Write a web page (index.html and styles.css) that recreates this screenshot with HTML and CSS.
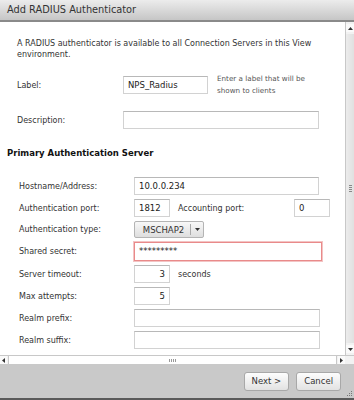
FILE: index.html
```html
<!DOCTYPE html>
<html lang="en">
<head>
  <meta charset="UTF-8">
  <title>Add RADIUS Authenticator</title>
  <link rel="stylesheet" href="styles.css">
</head>
<body>
  <div class="dialog">
    <header class="titlebar">Add RADIUS Authenticator</header>

    <div class="viewport">
      <main class="content">
        <p class="intro">A RADIUS authenticator is available to all Connection Servers in this View environment.</p>

        <div class="form general">
          <label>Label:</label>
          <div class="field">
            <div class="input w-label">NPS_Radius</div>
            <span class="help">Enter a label that will be<br>shown to clients</span>
          </div>

          <label>Description:</label>
          <div class="field">
            <div class="input w-desc"></div>
          </div>
        </div>

        <h2>Primary Authentication Server</h2>

        <div class="form server">
          <label>Hostname/Address:</label>
          <div class="field"><div class="input w-host">10.0.0.234</div></div>

          <label>Authentication port:</label>
          <div class="field">
            <div class="input w-port">1812</div>
            <span class="inline-label acct">Accounting port:</span>
            <div class="input w-port">0</div>
          </div>

          <label>Authentication type:</label>
          <div class="field">
            <div class="select">
              <span class="select-text">MSCHAP2</span>
              <span class="select-arrow">
                <svg width="5" height="3" viewBox="0 0 5 3"><path d="M0 0h5L2.5 3z" fill="#333"/></svg>
              </span>
            </div>
          </div>

          <label>Shared secret:</label>
          <div class="field"><div class="input w-secret invalid">*********</div></div>

          <label>Server timeout:</label>
          <div class="field">
            <div class="input w-port num">3</div>
            <span class="inline-label">seconds</span>
          </div>

          <label>Max attempts:</label>
          <div class="field"><div class="input w-port num">5</div></div>

          <label>Realm prefix:</label>
          <div class="field"><div class="input w-realm"></div></div>

          <label>Realm suffix:</label>
          <div class="field"><div class="input w-realm"></div></div>
        </div>
      </main>

      <div class="vscroll">
        <div class="arrow-btn up">
          <svg width="5" height="3" viewBox="0 0 5 3"><path d="M0 3h5L2.5 0z" fill="#333"/></svg>
        </div>
        <div class="vthumb"><span class="grip-v"></span></div>
        <div class="arrow-btn down">
          <svg width="5" height="3" viewBox="0 0 5 3"><path d="M0 0h5L2.5 3z" fill="#333"/></svg>
        </div>
      </div>
    </div>

    <div class="hscroll">
      <div class="arrow-btn left">
        <svg width="3" height="5" viewBox="0 0 3 5"><path d="M3 0v5L0 2.5z" fill="#333"/></svg>
      </div>
      <div class="hthumb"><span class="grip-h"></span></div>
      <div class="arrow-btn right">
        <svg width="3" height="5" viewBox="0 0 3 5"><path d="M0 0v5L3 2.5z" fill="#333"/></svg>
      </div>
      <div class="corner"></div>
    </div>

    <footer class="footer">
      <button>Next &gt;</button>
      <button>Cancel</button>
      <svg class="resize" width="6" height="6" viewBox="0 0 6 6">
        <rect x="4" y="0" width="1" height="1" fill="#777"/>
        <rect x="2" y="2" width="1" height="1" fill="#777"/>
        <rect x="4" y="2" width="1" height="1" fill="#777"/>
        <rect x="0" y="4" width="1" height="1" fill="#777"/>
        <rect x="2" y="4" width="1" height="1" fill="#777"/>
        <rect x="4" y="4" width="1" height="1" fill="#777"/>
      </svg>
    </footer>
  </div>
</body>
</html>
```

FILE: styles.css
```css
body {
  margin: 0;
  font-family: "DejaVu Sans", Verdana, sans-serif;
  font-size: 8px;
  color: #333;
  background: #fff;
}
.dialog {
  width: 354px;
  height: 400px;
  display: flex;
  flex-direction: column;
  overflow: hidden;
}
.titlebar {
  height: 20px;
  line-height: 20px;
  padding-left: 7px;
  font-size: 9.8px;
  color: #333;
  background: linear-gradient(#ececec, #c6c6c6);
  border-bottom: 2px solid #8a8a8a;
  flex: none;
}
.viewport {
  height: 333px;
  display: flex;
  flex: none;
}
.content {
  flex: 1;
  overflow: hidden;
}
.intro {
  margin: 16px 20px 0 17px;
  line-height: 11px;
}
.form {
  display: grid;
  align-items: center;
}
.general {
  grid-template-columns: 106px 1fr;
  row-gap: 14px;
  margin: 13px 0 0 17px;
}
.server {
  grid-template-columns: 115px 1fr;
  row-gap: 4px;
  margin: 18px 0 0 19px;
}
.field {
  display: flex;
  align-items: center;
}
.input {
  box-sizing: border-box;
  height: 18px;
  line-height: 16px;
  padding: 0 4px;
  border: 1px solid #d2d2d2;
  border-top-color: #b8b8b8;
  background: #fff;
  font-size: 8.5px;
  color: #222;
  white-space: nowrap;
}
.input.num {
  text-align: right;
}
.input.invalid {
  border: 1px solid #e98a8a;
  box-shadow: 0 0 0 1px #f3c4c4;
  height: 19px;
}
.w-label { width: 85px; }
.w-desc { width: 196px; }
.w-host { width: 185px; }
.w-port { width: 36px; }
.w-secret { width: 188px; }
.w-realm { width: 186px; }
.help {
  margin-left: 9px;
  font-size: 7.2px;
  line-height: 12px;
  color: #555;
}
.inline-label {
  margin-left: 8px;
}
.acct {
  width: 116px;
}
h2 {
  margin: 18px 0 0 7px;
  font-size: 8.5px;
  line-height: 12px;
  color: #111;
}
.select {
  box-sizing: border-box;
  width: 70px;
  height: 17px;
  display: flex;
  align-items: center;
  border: 1px solid #b4b4b4;
  border-radius: 2px;
  background: linear-gradient(#f8f8f8, #dedede);
  font-size: 8.5px;
}
.select-text {
  flex: 1;
  text-align: center;
  padding-left: 2px;
}
.select-arrow {
  width: 12px;
  height: 11px;
  border-left: 1px solid #aaa;
  display: flex;
  align-items: center;
  justify-content: center;
}
.vscroll {
  width: 8px;
  border-left: 1px solid #c8c8c8;
  background: #f2f2f2;
  display: flex;
  flex-direction: column;
  flex: none;
}
.arrow-btn {
  display: flex;
  align-items: center;
  justify-content: center;
  background: #fafafa;
  flex: none;
}
.vscroll .arrow-btn {
  height: 8px;
  margin-top: 2px;
}
.vscroll .arrow-btn.down {
  margin: 0 0 2px;
}
.vthumb {
  flex: 1;
  margin: 2px 0;
  background: linear-gradient(90deg, #ececec, #e0e0e0);
  display: flex;
  align-items: center;
  justify-content: center;
}
.grip-v {
  width: 3px;
  height: 7px;
  background: repeating-linear-gradient(#888 0 1px, transparent 1px 2px);
}
.hscroll {
  height: 8px;
  display: flex;
  border-top: 1px solid #c8c8c8;
  background: #f2f2f2;
  flex: none;
}
.hscroll .arrow-btn {
  width: 7px;
}
.hthumb {
  flex: 1;
  margin: 0 1px;
  background: #fff;
  border-left: 1px solid #c8c8c8;
  border-right: 1px solid #c8c8c8;
  display: flex;
  align-items: center;
  justify-content: center;
}
.grip-h {
  width: 7px;
  height: 3px;
  background: repeating-linear-gradient(90deg, #999 0 1px, transparent 1px 2px);
}
.corner {
  width: 9px;
  background: #f2f2f2;
}
.footer {
  flex: 1;
  display: flex;
  align-items: center;
  justify-content: flex-end;
  gap: 7px;
  padding-right: 13px;
  background: #c9c9c9;
  border-bottom: 2px solid #5a5a5a;
  position: relative;
}
button {
  height: 19px;
  padding: 0 7px;
  font-family: "DejaVu Sans", Verdana, sans-serif;
  font-size: 8.5px;
  color: #333;
  border: 1px solid #a8a8a8;
  border-radius: 3px;
  background: linear-gradient(#fdfdfd, #e2e2e2);
}
.resize {
  position: absolute;
  right: 1px;
  bottom: 1px;
}
```
